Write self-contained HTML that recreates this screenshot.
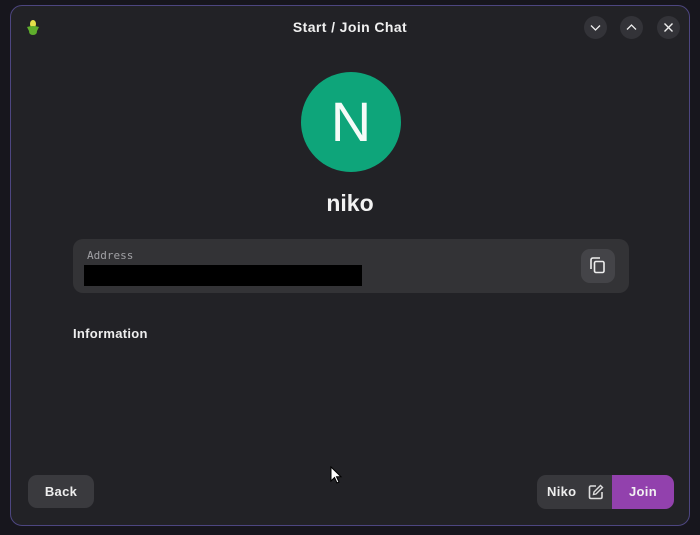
<!DOCTYPE html>
<html><head><style>
*{margin:0;padding:0;box-sizing:border-box}
body{width:700px;height:535px;background:#17161d;font-family:"Liberation Sans","DejaVu Sans",sans-serif;position:relative;overflow:hidden;color:#fff}
.win{position:absolute;left:10px;top:5px;width:680px;height:521px;background:#222226;border:1px solid #4d4680;border-radius:12px}
.title{position:absolute;left:0;right:0;top:19px;text-align:center;font-size:14px;font-weight:bold;color:#f0f0f0;letter-spacing:.4px}
.cb{position:absolute;top:16px;width:23px;height:23px;border-radius:50%;background:#333338}
.avatar{position:absolute;left:301px;top:72px;width:100px;height:100px;border-radius:50%;background:#0ea57a;color:#f5fbf8;font-size:56px;text-align:center;line-height:100px}
.name{position:absolute;left:0;right:0;top:190px;text-align:center;font-size:23px;font-weight:bold;color:#f2f2f2}
.addr{position:absolute;left:73px;top:239px;width:556px;height:54px;background:#333336;border-radius:10px}
.lbl{position:absolute;left:14px;top:10px;font-size:11px;color:#a0a0a4;font-family:"DejaVu Sans Mono","Liberation Mono",monospace}
.blk{position:absolute;left:11px;top:26px;width:278px;height:21px;background:#000}
.copy{position:absolute;left:508px;top:10px;width:34px;height:34px;border-radius:9px;background:#444448}
.info{position:absolute;left:73px;top:326px;font-size:13px;font-weight:bold;color:#eee;letter-spacing:.3px}
.back{position:absolute;left:28px;top:475px;width:66px;height:33px;border-radius:9px;background:#3a3a3e;font-size:13px;font-weight:bold;text-align:center;line-height:33px;color:#eee;letter-spacing:.3px}
.grp{position:absolute;left:537px;top:475px;width:137px;height:34px;border-radius:9px;background:#38383c;overflow:hidden}
.niko{position:absolute;left:10px;top:0;line-height:34px;font-size:13px;font-weight:bold;color:#eee;letter-spacing:.3px}
.join{position:absolute;left:75px;top:0;width:62px;height:34px;background:#9241ad;text-align:center;line-height:34px;font-size:13px;font-weight:bold;color:#f2f2f2;letter-spacing:.3px}
</style></head><body>
<div class="win"></div>
<svg style="position:absolute;left:25px;top:19px" width="16" height="17" viewBox="0 0 16 17"><ellipse cx="8" cy="5" rx="3" ry="4" fill="#e4e04a"/><path d="M2 8 Q8 6 14 8 L12 12 Q12 16 8 16 Q4 16 4 12Z" fill="#5fae2c"/></svg>
<div class="title">Start / Join Chat</div>
<div class="cb" style="left:584px"><svg width="23" height="23"><path d="M7 9.5 L11.5 14 L16 9.5" stroke="#eee" stroke-width="1.3" fill="none"/></svg></div>
<div class="cb" style="left:620px"><svg width="23" height="23"><path d="M7 13.5 L11.5 9 L16 13.5" stroke="#eee" stroke-width="1.3" fill="none"/></svg></div>
<div class="cb" style="left:657px"><svg width="23" height="23"><path d="M7.5 7.5 L15.5 15.5 M15.5 7.5 L7.5 15.5" stroke="#eee" stroke-width="1.4" fill="none"/></svg></div>
<div class="avatar">N</div>
<div class="name">niko</div>
<div class="addr"><div class="lbl">Address</div><div class="blk"></div>
<div class="copy"><svg width="34" height="34"><path d="M10 20 V11 Q10 9 12 9 H19" stroke="#eee" stroke-width="1.6" fill="none"/><rect x="13.5" y="12.5" width="9.5" height="11" rx="1.5" stroke="#eee" stroke-width="1.6" fill="none"/></svg></div></div>
<div class="info">Information</div>
<div class="back">Back</div>
<div class="grp"><div class="niko">Niko</div>
<svg style="position:absolute;left:50px;top:8px" width="18" height="18"><path d="M9 3 H4 Q2.5 3 2.5 4.5 V14 Q2.5 15.5 4 15.5 H13.5 Q15 15.5 15 14 V9" stroke="#ddd" stroke-width="1.6" fill="none"/><path d="M6.5 11.5 L7 9 L13.5 2.5 L15.5 4.5 L9 11Z" stroke="#ddd" stroke-width="1.4" fill="none"/></svg>
<div class="join">Join</div></div>
<svg style="position:absolute;left:330px;top:466px" width="14" height="20"><path d="M1 1 L1 15 L4.5 11.5 L7 17 L9 16 L6.5 10.8 L11 10.8Z" fill="#fff" stroke="#000" stroke-width="1"/></svg>
</body></html>
